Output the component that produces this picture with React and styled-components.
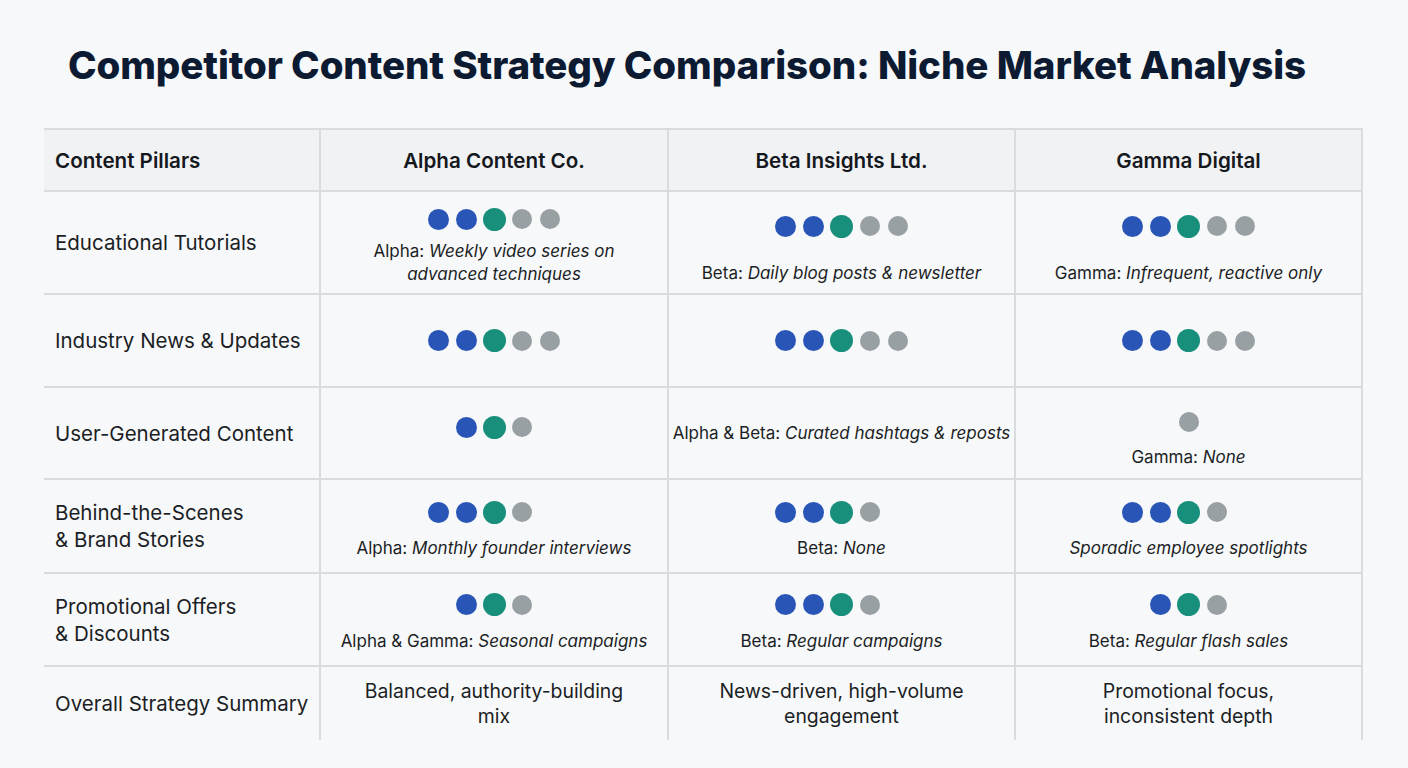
import React from "react";
import styled, { createGlobalStyle } from "styled-components";

const GlobalStyle = createGlobalStyle`
  html, body {
    margin: 0;
    padding: 0;
    background: #f7f8fa;
  }
  body {
    font-family: Inter, "Liberation Sans", Arial, sans-serif;
    color: #1b1e24;
  }
`;

const COLORS = {
  b: "#2855b6",
  t: "#178f7a",
  g: "#99a0a3",
};

const SIZES = {
  b: 21,
  t: 23,
  g: 20,
};

// a space in a pattern keeps an empty slot, so 4-dot rows line up with 5-dot rows
const rows = [
  {
    label: ["Educational Tutorials"],
    height: 103,
    cells: [
      { dots: "bbtgg", prefix: "Alpha: ", note: ["Weekly video series on", "advanced techniques"], gap: 9, offset: 4 },
      { dots: "bbtgg", prefix: "Beta: ", note: ["Daily blog posts & newsletter"], gap: 24, offset: 7 },
      { dots: "bbtgg", prefix: "Gamma: ", note: ["Infrequent, reactive only"], gap: 24, offset: 7 },
    ],
  },
  {
    label: ["Industry News & Updates"],
    height: 93,
    cells: [{ dots: "bbtgg" }, { dots: "bbtgg" }, { dots: "bbtgg" }],
  },
  {
    label: ["User-Generated Content"],
    height: 92,
    cells: [
      { dots: "btg", offset: -6 },
      { prefix: "Alpha & Beta: ", note: ["Curated hashtags & reposts"] },
      { dots: "g", prefix: "Gamma: ", note: ["None"], gap: 12, offset: 6 },
    ],
  },
  {
    label: ["Behind-the-Scenes", "& Brand Stories"],
    height: 94,
    cells: [
      { dots: "bbtg ", prefix: "Alpha: ", note: ["Monthly founder interviews"], offset: 4 },
      { dots: "bbtg ", prefix: "Beta: ", note: ["None"], offset: 4 },
      { dots: "bbtg ", note: ["Sporadic employee spotlights"], offset: 4 },
    ],
  },
  {
    label: ["Promotional Offers", "& Discounts"],
    height: 93,
    cells: [
      { dots: "btg", prefix: "Alpha & Gamma: ", note: ["Seasonal campaigns"], offset: 3 },
      { dots: "bbtg ", prefix: "Beta: ", note: ["Regular campaigns"], offset: 3 },
      { dots: "btg", prefix: "Beta: ", note: ["Regular flash sales"], offset: 3 },
    ],
  },
];

const summary = [
  ["Balanced, authority-building", "mix"],
  ["News-driven, high-volume", "engagement"],
  ["Promotional focus,", "inconsistent depth"],
];

function Dots({ pattern }) {
  return (
    <DotRow>
      {pattern.split("").map((k, i) => (
        <DotSlot key={i}>{k !== " " && <Dot $color={COLORS[k]} $size={SIZES[k]} />}</DotSlot>
      ))}
    </DotRow>
  );
}

function Note({ prefix, lines }) {
  return (
    <NoteText>
      {lines.map((line, i) => (
        <React.Fragment key={i}>
          {i === 0 && prefix}
          <em>{line}</em>
          {i < lines.length - 1 && <br />}
        </React.Fragment>
      ))}
    </NoteText>
  );
}

function App() {
  return (
    <Page>
      <GlobalStyle />
      <Title>Competitor Content Strategy Comparison: Niche Market Analysis</Title>
      <Table>
        <HeadCell $first>Content Pillars</HeadCell>
        <HeadCell>Alpha Content Co.</HeadCell>
        <HeadCell>Beta Insights Ltd.</HeadCell>
        <HeadCell>Gamma Digital</HeadCell>

        {rows.map((row, r) => (
          <React.Fragment key={r}>
            <LabelCell $h={row.height}>
              {row.label.map((l, i) => (
                <span key={i}>{l}</span>
              ))}
            </LabelCell>
            {row.cells.map((c, i) => (
              <Cell key={i} $h={row.height} $gap={c.gap ?? 13} $offset={c.offset ?? 0}>
                {c.dots && <Dots pattern={c.dots} />}
                {c.note && <Note prefix={c.prefix} lines={c.note} />}
              </Cell>
            ))}
          </React.Fragment>
        ))}

        <LabelCell $h={75}>
          <span>Overall Strategy Summary</span>
        </LabelCell>
        {summary.map((s, i) => (
          <Cell key={i} $h={75} $gap={0} $offset={0}>
            <SummaryText>
              {s[0]}
              <br />
              {s[1]}
            </SummaryText>
          </Cell>
        ))}
      </Table>
    </Page>
  );
}

const Page = styled.div`
  width: 1408px;
  min-height: 768px;
  box-sizing: border-box;
  padding: 43px 44px 20px;
`;

const Title = styled.h1`
  margin: 0 0 41px 24px;
  font-size: 38.5px;
  line-height: 44px;
  font-weight: 800;
  color: #0c1a32;
  letter-spacing: -0.1px;
  white-space: nowrap;
`;

const Table = styled.div`
  display: grid;
  grid-template-columns: 277px 348px 347px 347px;
  width: 1319px;
`;

const BaseCell = styled.div`
  box-sizing: border-box;
  border-top: 2px solid #d9dbdf;
  border-right: 2px solid #d9dbdf;
  display: flex;
  flex-direction: column;
  justify-content: center;
`;

const HeadCell = styled(BaseCell)`
  height: 62px;
  background: #f1f2f4;
  font-size: 20.6px;
  font-weight: 600;
  color: #15181d;
  align-items: ${({ $first }) => ($first ? "flex-start" : "center")};
  padding-left: ${({ $first }) => ($first ? "11px" : "0")};
`;

const LabelCell = styled(BaseCell)`
  height: ${({ $h }) => $h}px;
  padding-left: 11px;
  font-size: 20.5px;
  line-height: 27px;
  color: #1b1e24;
`;

const Cell = styled(BaseCell)`
  height: ${({ $h }) => $h}px;
  align-items: center;
  text-align: center;
  gap: ${({ $gap }) => $gap}px;
  padding-top: ${({ $offset }) => Math.max(0, $offset * 2)}px;
  padding-bottom: ${({ $offset }) => Math.max(0, -$offset * 2)}px;
`;

const DotRow = styled.div`
  display: flex;
  align-items: center;
  justify-content: center;
`;

const DotSlot = styled.div`
  width: 28px;
  height: 24px;
  display: flex;
  align-items: center;
  justify-content: center;
`;

const Dot = styled.span`
  display: block;
  width: ${({ $size }) => $size}px;
  height: ${({ $size }) => $size}px;
  border-radius: 50%;
  background: ${({ $color }) => $color};
`;

const NoteText = styled.div`
  font-size: 17px;
  line-height: 23px;
  color: #1b1e24;

  em {
    font-style: italic;
  }
`;

const SummaryText = styled.div`
  font-size: 19.4px;
  line-height: 25px;
  color: #1b1e24;
`;

export default App;
